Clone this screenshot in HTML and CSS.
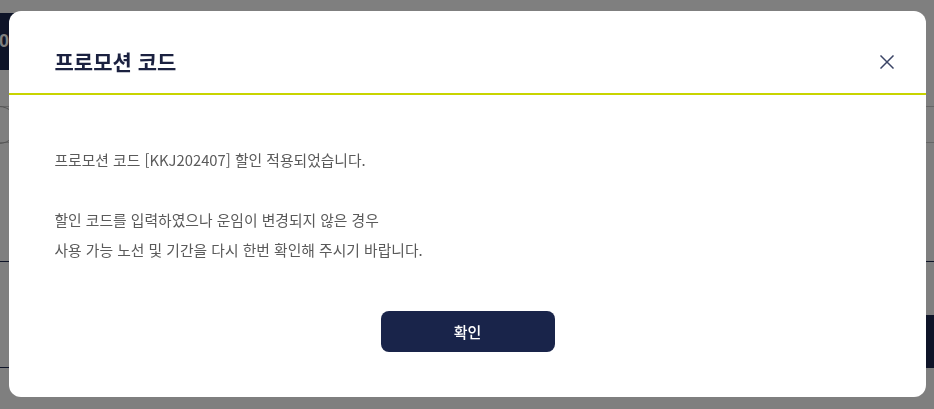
FILE: index.html
```html
<!DOCTYPE html>
<html lang="ko">
<head>
<meta charset="utf-8">
<title>프로모션 코드</title>
<link rel="stylesheet" href="styles.css">
</head>
<body>
<div class="page">
  <div class="topbar">
    <div class="chip">01</div>
  </div>
  <div class="tabs">
    <div class="circle"></div>
  </div>
  <div class="subrow"></div>
  <div class="content"></div>
  <div class="lower">
    <div class="dark-btn"></div>
  </div>
</div>

<div class="overlay">
  <div class="modal">
    <div class="modal-header">
      <h2 class="modal-title">프로모션 코드</h2>
      <button class="close" aria-label="닫기">
        <svg width="14" height="14" viewBox="0 0 14 14"><path d="M1 1L13 13M13 1L1 13" stroke="#3b4566" stroke-width="1.5" fill="none" stroke-linecap="square"/></svg>
      </button>
    </div>
    <div class="modal-body">
      <p class="msg">프로모션 코드 [KKJ202407] 할인 적용되었습니다.<br><br>할인 코드를 입력하였으나 운임이 변경되지 않은 경우<br>사용 가능 노선 및 기간을 다시 한번 확인해 주시기 바랍니다.</p>
      <div class="actions">
        <button class="confirm">확인</button>
      </div>
    </div>
  </div>
</div>
</body>
</html>
```

FILE: styles.css
```css
html, body {
  margin: 0;
  padding: 0;
  height: 100%;
}
body {
  background: #fff;
  font-family: "Noto Sans CJK KR", "Noto Sans", sans-serif;
  overflow: hidden;
}
.page {
  height: 100%;
  display: flex;
  flex-direction: column;
}
.topbar {
  margin-top: 13px;
  height: 57px;
  display: flex;
}
.chip {
  width: 200px;
  background: #1c2850;
  color: #fff;
  font-size: 18px;
  font-weight: 700;
  line-height: 57px;
  text-indent: -1px;
  font-family: "Liberation Sans", sans-serif;
}
.tabs {
  height: 36px;
  border-bottom: 1px solid #ccc;
  position: relative;
}
.circle {
  position: absolute;
  left: -20px;
  top: 36px;
  width: 36px;
  height: 36px;
  border: 1px solid #aaa;
  border-radius: 50%;
}
.subrow {
  height: 35px;
  border-bottom: 1px solid #ccc;
}
.content {
  height: 118px;
  border-bottom: 1px solid #1c2850;
}
.lower {
  height: 105px;
  border-bottom: 1px solid #1c2850;
  display: flex;
  justify-content: flex-end;
  align-items: flex-end;
}
.dark-btn {
  width: 200px;
  height: 52px;
  background: #1c2850;
}

.overlay {
  position: fixed;
  inset: 0;
  background: rgba(0, 0, 0, 0.5);
  display: flex;
  align-items: flex-start;
  justify-content: center;
  padding-top: 11px;
}
.modal {
  width: 917px;
  background: #fff;
  border-radius: 12px;
  overflow: hidden;
}
.modal-header {
  display: flex;
  align-items: center;
  justify-content: space-between;
  padding: 36px 32px 18px 46px;
  border-bottom: 2px solid #c8d400;
}
.modal-title {
  margin: 0;
  font-size: 21px;
  line-height: 28px;
  font-weight: 700;
  color: #1b2140;
}
.close {
  border: 0;
  background: none;
  padding: 0;
  width: 14px;
  height: 14px;
  display: flex;
  margin-top: 2px;
  cursor: pointer;
}
.modal-body {
  padding: 50px 46px 45px;
}
.msg {
  margin: 0;
  font-size: 14.8px;
  line-height: 30px;
  color: #5a5a5a;
}
.actions {
  display: flex;
  justify-content: center;
  margin-top: 46px;
}
.confirm {
  width: 174px;
  height: 41px;
  border: 0;
  border-radius: 8px;
  background: #19244a;
  color: #fff;
  font-family: "Noto Sans CJK KR", "Noto Sans", sans-serif;
  font-size: 15px;
  font-weight: 500;
  margin-left: 1px;
}
```
